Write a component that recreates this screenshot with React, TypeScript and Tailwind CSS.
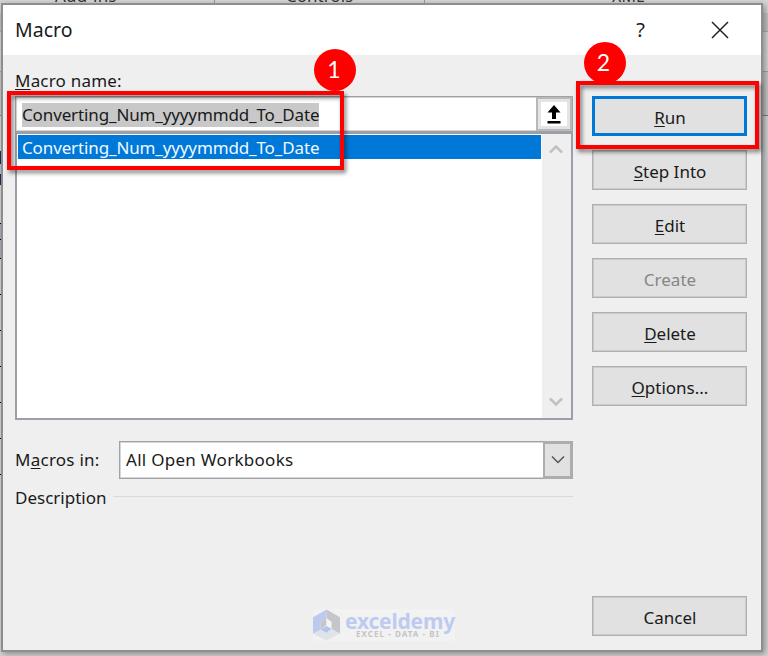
import type { ReactNode } from "react";

interface DialogButtonProps {
  children: ReactNode;
  primary?: boolean;
  disabled?: boolean;
}

function DialogButton({ children, primary, disabled }: DialogButtonProps) {
  return (
    <button
      disabled={disabled}
      className={`flex h-10 w-[155px] items-center justify-center bg-[#e1e1e1] pl-px pt-[3px] ${
        primary
          ? "border-[3px] border-[#0078d7]"
          : "border border-[#b0b0b0] shadow-[inset_0_0_0_1px_#cbcbcb]"
      } ${disabled ? "text-[#868686]" : "text-[#1a1a1a]"}`}
    >
      <span>{children}</span>
    </button>
  );
}

// Underlined access key inside a label
function Key({ children }: { children: ReactNode }) {
  return <span className="underline decoration-1 underline-offset-2">{children}</span>;
}

function Chevron({ up, className }: { up?: boolean; className: string }) {
  return (
    <svg width="14" height="10" viewBox="0 0 14 10" fill="none" stroke="currentColor" className={className}>
      <path d={up ? "M1 8.5 7 2.5 13 8.5" : "M1 1.5 7 7.5 13 1.5"} />
    </svg>
  );
}

const MACRO = "Converting_Num_yyyymmdd_To_Date";

// y positions of the cell borders that peek out left of the dialog
const GRID_LINES = [223, 239, 258, 294, 330, 366, 402, 438, 474];

function Worksheet() {
  return (
    <div className="absolute inset-0 bg-[#d4d4d4]">
      <span className="absolute -top-[14px] left-[55px] text-[17px] leading-5 tracking-[0.2px] text-[#333]">Add-ins</span>
      <span className="absolute -top-[14px] left-[286px] text-[17px] leading-5 text-[#333]">Controls</span>
      <span className="absolute -top-[14px] left-[612px] text-[16px] leading-5 text-[#333]">XML</span>
      <div className="absolute left-[214px] top-0 h-3 w-px bg-[#999]" />
      <div className="absolute left-[424px] top-0 h-3 w-px bg-[#999]" />
      <div className="absolute left-0 right-0 top-[13px] h-[18px] bg-[#c2c2c2]" />
      <div className="absolute left-0 right-0 top-[31px] h-px bg-[#aaa]" />
      <div className="absolute left-0 right-0 top-[71px] h-px bg-[#a2a2a2]" />
      <div className="absolute left-0 right-0 top-[72px] h-[43px] bg-[#c6c6c6]" />
      <div className="absolute left-0 right-0 top-[115px] h-px bg-[#7c7c7c]" />
      <div className="absolute left-0 top-[151px] h-[34px] w-2 bg-[#1f2a55]" />
      <div className="absolute left-0 top-[164px] h-[10px] w-2 bg-[#b9c3d8]" />
      <div className="absolute left-0 top-[223px] h-[36px] w-2 bg-[#a5aec4]" />
      {GRID_LINES.map((y) => (
        <div key={y} className="absolute left-0 h-px w-2 bg-black" style={{ top: y }} />
      ))}
    </div>
  );
}

function Watermark() {
  return (
    <div className="flex h-8 w-[142px] bg-[#f2f2f2]">
      <svg width="28" height="32" viewBox="0 0 28 32">
        <path d="M14 0v9L8 13v8L0 25V8z" fill="#bccaf0" />
        <path d="M14 0 28 8v17l-9-5v-7l-5-4z" fill="#c4c6c9" />
        <path d="M0 25 8 21l6 3 5-4 9 5-14 7z" fill="#dfe4e8" />
        <path d="M8 13 14 9v7l-6 5z" fill="#c4c6c9" />
        <path d="M14 9 19 13v7l-5-3z" fill="#f4f4f4" />
        <path d="M14 17 19 20 14 24 8 21z" fill="#b3c3f0" />
      </svg>
      <div className="ml-[5px] flex flex-col">
        <span className="h-[21px] text-[21px] font-bold leading-[24px] tracking-[-0.2px] text-[#becbf1]">exceldemy</span>
        <span className="ml-[11px] text-[8px] font-bold leading-[8px] tracking-[1.05px] text-[#c4c4c4]">EXCEL - DATA - BI</span>
      </div>
    </div>
  );
}

export default function App() {
  return (
    <div className="relative h-[656px] w-[768px] overflow-hidden font-['Noto_Sans',sans-serif] text-[17px] leading-6 text-[#1a1a1a]">
      <Worksheet />

      <div className="relative ml-px mt-[3px] flex h-[649px] w-[762px] flex-col border-2 border-[#8e8e8e] bg-[#efefef] shadow-[2px_2px_6px_rgba(0,0,0,0.35)]">
        <header className="flex h-[50px] shrink-0 items-center bg-white pl-3 pr-[32px]">
          <h1 className="flex-1 text-[19.5px]">Macro</h1>
          <span className="-mt-px mr-[66px] text-[20px] leading-6">?</span>
          <svg width="18" height="18" viewBox="0 0 18 18" stroke="#222" strokeWidth="1.5" className="-mt-px">
            <path d="M1 1 17 17M17 1 1 17" />
          </svg>
        </header>

        <div className="flex flex-1 justify-between pl-3 pr-[14px]">
          <main className="flex w-[558px] flex-col">
            <label className="mt-[14px] h-[27px] tracking-[0.2px]">
              <Key>M</Key>acro name:
            </label>

            <div className="flex h-[36px] border border-[#a0a2a8] bg-white shadow-[inset_0_0_0_1px_#d5d6d8]">
              <div className="flex flex-1 items-center pl-[6px] pt-px">
                <span className="bg-[#c8c8c8] tracking-[-0.13px]">{MACRO}</span>
              </div>
              <div className="flex w-[36px] items-center justify-center border-2 border-[#b8b8b8] bg-[#e4e4e4]">
                <div className="flex h-[24px] w-[26px] items-center justify-center bg-white">
                  <svg width="14" height="19" viewBox="0 0 14 19">
                    <path d="M7 0 13.500 7.500H9V14H5V7.500H0.500zM0.500 16h13v2.500h-13z" fill="#000" />
                  </svg>
                </div>
              </div>
            </div>

            <div className="flex h-[288px] border-2 border-[#9b9fa8] bg-white">
              <div className="flex-1 pl-px pt-px">
                <div className="h-6 bg-[#0078d7] pl-[4px] leading-[26px] tracking-[-0.13px] text-[#f0f8ff]">{MACRO}</div>
              </div>
              <div className="ml-px flex w-[29px] flex-col items-center justify-between bg-[#efefef] pb-[11px] pr-px pt-[10px] text-[#c1c1c1]">
                <Chevron up className="stroke-[2.500]" />
                <Chevron className="stroke-[2.500]" />
              </div>
            </div>

            <div className="mt-[21px] flex h-[38px] items-center">
              <label className="w-[104px] tracking-[0.25px]">
                M<Key>a</Key>cros in:
              </label>
              <div className="flex h-[38px] flex-1 border border-[#a0a2a8] bg-white shadow-[inset_0_0_0_1px_#d5d6d8]">
                <span className="flex flex-1 items-center pl-[6px] tracking-[0.28px]">All Open Workbooks</span>
                <div className="-m-px flex w-[30px] items-center justify-center border-[3px] border-l-2 border-[#adadad] bg-[#e1e1e1]">
                  <Chevron className="stroke-[1.500] text-[#555]" />
                </div>
              </div>
            </div>

            <div className="mt-[7px] flex items-center gap-[7px]">
              <span>Description</span>
              <div className="-mt-[3px] h-px flex-1 bg-[#d9d9d9]" />
            </div>

            <div className="ml-[298px] mt-[99px]">
              <Watermark />
            </div>
          </main>

          <aside className="flex flex-col gap-[14px] pt-[41px]">
            <DialogButton primary>
              <Key>R</Key>un
            </DialogButton>
            <DialogButton>
              <Key>S</Key>tep Into
            </DialogButton>
            <DialogButton>
              <Key>E</Key>dit
            </DialogButton>
            <DialogButton disabled>Create</DialogButton>
            <DialogButton>
              <Key>D</Key>elete
            </DialogButton>
            <DialogButton>
              <Key>O</Key>ptions...
            </DialogButton>
            <div className="mb-[14px] mt-auto">
              <DialogButton>Cancel</DialogButton>
            </div>
          </aside>
        </div>
      </div>

      {/* Step callouts over the dialog */}
      <div className="absolute left-[7px] top-[91px] h-[79px] w-[337px] border-4 border-[#f00] drop-shadow-[2px_3px_2px_rgba(0,0,0,0.5)]" />
      <div className="absolute left-[576px] top-[81px] h-[68px] w-[183px] border-4 border-[#f00] drop-shadow-[2px_3px_2px_rgba(0,0,0,0.5)]" />
      <div className="absolute left-[314px] top-[49px] flex size-[42px] items-center justify-center rounded-full bg-[#f00] pb-[2px] pr-[2px] font-['Lato',sans-serif] text-[23px] text-white">1</div>
      <div className="absolute left-[584px] top-[42px] flex size-[42px] items-center justify-center rounded-full bg-[#f00] pb-[2px] pr-[3px] font-['Lato',sans-serif] text-[23px] text-white">2</div>
    </div>
  );
}
